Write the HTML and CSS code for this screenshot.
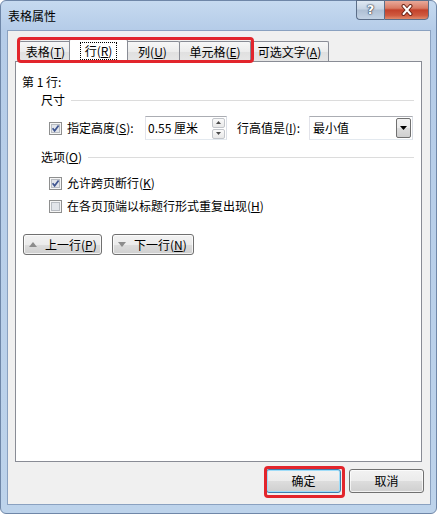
FILE: index.html
```html
<!DOCTYPE html>
<html lang="zh-CN">
<head>
<meta charset="utf-8">
<title>表格属性</title>
<link rel="stylesheet" href="styles.css">
</head>
<body>
<div class="window">
  <div class="titlebar">
    <span class="title">表格属性</span>
    <div class="caption">
      <div class="cap help">?</div>
      <div class="cap close">
        <svg width="14" height="12" viewBox="0 0 14 12"><path d="M3.5 2 L10.5 10 M10.5 2 L3.5 10" stroke="#6b2418" stroke-width="4" stroke-linecap="round" fill="none"/><path d="M3.5 2 L10.5 10 M10.5 2 L3.5 10" stroke="#ffffff" stroke-width="2" stroke-linecap="round" fill="none"/></svg>
      </div>
    </div>
  </div>
  <div class="content">
    <div class="tabs">
      <div class="tab w1">表格(<u>T</u>)</div>
      <div class="tab w2 sel"><span class="focus">行(<u>R</u>)</span></div>
      <div class="tab w3">列(<u>U</u>)</div>
      <div class="tab w4">单元格(<u>E</u>)</div>
      <div class="tab w5">可选文字(<u>A</u>)</div>
    </div>
    <div class="panel">
      <div class="line">第 1 行:</div>
      <div class="group g1"><span>尺寸</span><i class="rule"></i></div>
      <div class="sizerow">
        <svg class="cb" width="13" height="13" viewBox="0 0 13 13"><rect x="0.5" y="0.5" width="12" height="12" fill="#f6f6f6" stroke="#8e8f8f"/><rect x="2.5" y="2.5" width="8" height="8" fill="#e2e5ea" stroke="#b8bcc2"/><path d="M3.6 6.3 L5.6 8.8 L9.6 3.4" fill="none" stroke="#3f5590" stroke-width="1.7"/></svg>
        <span class="lbl1">指定高度(<u>S</u>):</span>
        <div class="spin">
          <span>0.55 厘米</span>
          <div class="spinbtns">
            <div class="sb"><svg width="5" height="3" viewBox="0 0 5 3"><path d="M0 3 L2.5 0 L5 3Z" fill="#4a4a4a"/></svg></div>
            <div class="sb"><svg width="5" height="3" viewBox="0 0 5 3"><path d="M0 0 L2.5 3 L5 0Z" fill="#4a4a4a"/></svg></div>
          </div>
        </div>
        <span class="lbl2">行高值是(<u>I</u>):</span>
        <div class="select">
          <span>最小值</span>
          <div class="drop"><svg width="7" height="4" viewBox="0 0 7 4"><path d="M0 0 L7 0 L3.5 4Z" fill="#000"/></svg></div>
        </div>
      </div>
      <div class="group g2"><span>选项(<u>O</u>)</span><i class="rule"></i></div>
      <div class="check c1">
        <svg class="cb" width="13" height="13" viewBox="0 0 13 13"><rect x="0.5" y="0.5" width="12" height="12" fill="#f6f6f6" stroke="#8e8f8f"/><rect x="2.5" y="2.5" width="8" height="8" fill="#e2e5ea" stroke="#b8bcc2"/><path d="M3.6 6.3 L5.6 8.8 L9.6 3.4" fill="none" stroke="#3f5590" stroke-width="1.7"/></svg>
        <span>允许跨页断行(<u>K</u>)</span>
      </div>
      <div class="check c2">
        <svg class="cb" width="13" height="13" viewBox="0 0 13 13"><rect x="0.5" y="0.5" width="12" height="12" fill="#f6f6f6" stroke="#8e8f8f"/><rect x="2.5" y="2.5" width="8" height="8" fill="#e2e5ea" stroke="#b8bcc2"/></svg>
        <span>在各页顶端以标题行形式重复出现(<u>H</u>)</span>
      </div>
      <div class="nav">
        <button class="navbtn prev"><svg width="8" height="5" viewBox="0 0 8 5"><path d="M0 5 L4 0 L8 5Z" fill="#8c8c8c"/></svg><span>上一行(<u>P</u>)</span></button>
        <button class="navbtn next"><svg width="8" height="5" viewBox="0 0 8 5"><path d="M0 0 L8 0 L4 5Z" fill="#8c8c8c"/></svg><span>下一行(<u>N</u>)</span></button>
      </div>
    </div>
    <div class="footer">
      <button class="btn ok">确定</button>
      <button class="btn">取消</button>
    </div>
  </div>
  <div class="mark mark-tabs"></div>
  <div class="mark mark-ok"></div>
</div>
</body>
</html>
```
FILE: styles.css
```css
html, body {
  margin: 0;
  padding: 0;
  background: #ffffff;
}
.window {
  position: relative;
  width: 437px;
  height: 514px;
  box-sizing: border-box;
  border: 1px solid #6f87a8;
  border-radius: 6px;
  background: linear-gradient(180deg, #c6daf0 0, #b5cce8 29px, #bdd3eb 100%);
  display: flex;
  flex-direction: column;
  font-family: "Noto Sans CJK SC", "Noto Sans", sans-serif;
  font-size: 12px;
  color: #000;
}
u { text-decoration: underline; text-underline-offset: 1px; }

.titlebar {
  height: 29px;
  display: flex;
  align-items: flex-start;
  flex: none;
}
.title {
  margin: 7px 0 0 7px;
  line-height: 16px;
  font-size: 12px;
}
.caption {
  margin-left: auto;
  margin-right: 7px;
  margin-top: -1px;
  display: flex;
}
.cap {
  height: 20px;
  box-sizing: border-box;
  border: 1px solid #5b6e88;
  display: flex;
  align-items: center;
  justify-content: center;
}
.help {
  width: 28px;
  border-right: none;
  border-radius: 0 0 0 4px;
  background: linear-gradient(180deg, #dfe8f2 0, #c6d4e4 45%, #aebfd3 50%, #c3d3e5 100%);
  color: #fff;
  font-family: "DejaVu Sans", sans-serif;
  font-weight: bold;
  font-size: 13px;
  line-height: 16px;
  text-shadow: 0 0 1px #2e3a4c, 0 0 1px #2e3a4c, 0 0 2px #2e3a4c;
}
.close {
  width: 45px;
  border-radius: 0 0 4px 0;
  background: linear-gradient(180deg, #e9a99a 0, #d97a63 40%, #c3412b 50%, #cf5a3f 80%, #e08a6c 100%);
}

.content {
  flex: 1;
  margin: 0 5px 8px 6px;
  border: 1px solid #8aa1c0;
  background: #f0f0f0;
  display: flex;
  flex-direction: column;
  padding: 8px 0 0 7px;
}

.tabs {
  display: flex;
  align-items: flex-end;
  height: 23px;
  padding-left: 4px;
  flex: none;
}
.tab {
  box-sizing: border-box;
  height: 20px;
  margin-bottom: 1px;
  margin-left: -1px;
  border: 1px solid #898c95;
  border-bottom: none;
  border-radius: 2px 2px 0 0;
  background: linear-gradient(180deg, #f7f7f7 0, #ececec 50%, #e0e0e0 52%, #e6e6e6 100%);
  display: flex;
  align-items: center;
  justify-content: center;
  line-height: 16px;
  padding-top: 1px;
}
.tab.w1 { width: 53px; margin-left: 0; }
.tab.w2 { width: 55px; }
.tab.w3 { width: 55px; }
.tab.w4 { width: 72px; }
.tab.w5 { width: 79px; }
.tab.sel {
  position: relative;
  z-index: 2;
  width: 59px;
  height: 23px;
  margin: 0 -2px 0 -3px;
  background: #ffffff;
  padding-top: 0;
  align-items: flex-start;
}
.focus {
  margin-top: 2px;
  border: 1px dotted #000;
  padding: 0 4px 1px 4px;
  line-height: 15px;
}

.panel {
  position: relative;
  z-index: 1;
  width: 407px;
  height: 401px;
  box-sizing: border-box;
  margin-top: -1px;
  border: 1px solid #898c95;
  background: #ffffff;
  padding: 12px 7px 0 6px;
  flex: none;
}
.line { line-height: 16px; }
.group {
  display: flex;
  align-items: center;
  padding-left: 19px;
  line-height: 16px;
}
.group .rule {
  flex: 1;
  height: 1px;
  background: #dcdcdc;
  margin-left: 6px;
}
.g1 { margin-top: 2px; }
.g2 { margin-top: 9px; }

.cb { flex: none; display: block; }

.sizerow {
  display: flex;
  align-items: center;
  height: 24px;
  margin-top: 8px;
  padding-left: 27px;
}
.lbl1 { margin-left: 5px; width: 78px; line-height: 16px; }
.lbl2 { margin-left: 10px; width: 72px; line-height: 16px; }
.spin, .select {
  box-sizing: border-box;
  height: 24px;
  border: 1px solid #abadb3;
  border-color: #abadb3 #dbdfe6 #e3e9ef #e2e3ea;
  background: #fff;
  display: flex;
  align-items: center;
  line-height: 16px;
}
.spin { width: 82px; padding-left: 2px; }
.spinbtns {
  margin-left: auto;
  margin-right: 1px;
  display: flex;
  flex-direction: column;
  gap: 0;
}
.sb {
  width: 13px;
  height: 10px;
  box-sizing: border-box;
  border: 1px solid #c2c5ca;
  border-radius: 2px;
  background: linear-gradient(180deg, #fafafa, #e8e8e8);
  display: flex;
  align-items: center;
  justify-content: center;
}
.sb + .sb { margin-top: 1px; }
.select { width: 104px; padding-left: 3px; }
.drop {
  margin-left: auto;
  margin-right: 1px;
  width: 15px;
  height: 20px;
  box-sizing: border-box;
  border: 1px solid #707070;
  border-radius: 2px;
  background: linear-gradient(180deg, #f2f2f2 0, #ebebeb 50%, #dddddd 50%, #cfcfcf 100%);
  display: flex;
  align-items: center;
  justify-content: center;
}

.check {
  display: flex;
  align-items: center;
  height: 16px;
  padding-left: 27px;
  line-height: 16px;
}
.check span { margin-left: 5px; }
.c1 { margin-top: 10px; }
.c2 { margin-top: 7px; }

.nav {
  display: flex;
  margin-top: 20px;
  padding-left: 1px;
  gap: 10px;
}
.navbtn, .btn {
  font-family: inherit;
  font-size: 12px;
  color: #000;
  box-sizing: border-box;
  border: 1px solid #707070;
  border-radius: 3px;
  background: linear-gradient(180deg, #f2f2f2 0, #ebebeb 50%, #dddddd 50%, #cfcfcf 100%);
  box-shadow: inset 0 0 0 1px rgba(255,255,255,0.7);
  margin: 0;
  padding: 0;
}
.navbtn {
  height: 21px;
  display: flex;
  align-items: center;
  padding-left: 5px;
  line-height: 16px;
}
.navbtn span { margin-left: 8px; }
.prev { width: 79px; }
.next { width: 82px; }

.footer {
  display: flex;
  justify-content: flex-end;
  gap: 8px;
  padding: 7px 6px 0 0;
}
.btn {
  width: 75px;
  height: 24px;
  line-height: 16px;
}
.btn.ok {
  border-color: #3c7fb1;
  box-shadow: inset 0 0 0 1px #9fdcf8;
}

.mark {
  position: absolute;
  box-sizing: border-box;
  border: 3px solid #e2252c;
  border-radius: 4px;
  z-index: 5;
  pointer-events: none;
}
.mark-tabs {
  left: 16px;
  top: 36px;
  width: 237px;
  height: 26px;
}
.mark-ok {
  left: 263px;
  top: 465px;
  width: 81px;
  height: 32px;
}
```
